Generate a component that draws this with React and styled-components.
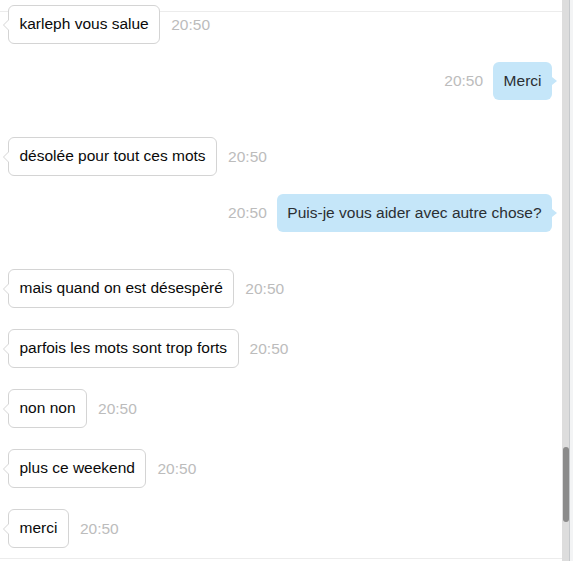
import React from "react";
import styled, { createGlobalStyle } from "styled-components";

const Global = createGlobalStyle`
  html, body { margin: 0; padding: 0; background: #fff; }
  body { font-family: "Liberation Sans", Arial, sans-serif; }
  * { box-sizing: border-box; }
`;

const Frame = styled.div`
  display: flex;
  width: 573px;
  height: 561px;
  overflow: hidden;
  background: #fff;
`;

const Pane = styled.div`
  width: 562px;
  height: 561px;
  display: flex;
  flex-direction: column;
`;

const Messages = styled.div`
  flex: 1;
  min-height: 0;
  overflow: hidden;
  display: flex;
  flex-direction: column;
`;

const Divider = styled.div`
  flex: none;
  height: 12px;
  border-bottom: 1px solid #ececec;
  margin-bottom: -28px;
`;

const Row = styled.div`
  flex: none;
  display: flex;
  align-items: center;
  justify-content: ${(p) => (p.$mine ? "flex-end" : "flex-start")};
  gap: ${(p) => (p.$mine ? "10px" : "11px")};
  padding: ${(p) => (p.$mine ? "0 10px 0 0" : "0 0 0 8px")};
  margin: ${(p) => (p.$mine ? "18px 0 16px" : "21px 0 0")};
`;

const Bubble = styled.div`
  position: relative;
  font-size: 15.5px;
  line-height: 18px;
  white-space: nowrap;
  border-radius: 6px;
  ${(p) =>
    p.$mine
      ? `
    background: #c5e6f9;
    color: #2b2f33;
    padding: 10px 10.5px;
    &::after {
      content: "";
      position: absolute;
      right: -5px;
      top: 50%;
      margin-top: -4px;
      border-top: 4px solid transparent;
      border-bottom: 4px solid transparent;
      border-left: 5px solid #c5e6f9;
    }
  `
      : `
    background: #fff;
    color: #0a0a0a;
    border: 1px solid #d4d4d4;
    padding: 9px 10.5px 10px;
    &::before {
      content: "";
      position: absolute;
      left: -6px;
      top: 50%;
      margin-top: -6px;
      border-top: 6px solid transparent;
      border-bottom: 6px solid transparent;
      border-right: 6px solid #d4d4d4;
    }
    &::after {
      content: "";
      position: absolute;
      left: -5px;
      top: 50%;
      margin-top: -5px;
      border-top: 5px solid transparent;
      border-bottom: 5px solid transparent;
      border-right: 5px solid #fff;
    }
  `}
`;

const Time = styled.span`
  font-size: 15.5px;
  color: #bcbcbc;
  white-space: nowrap;
`;

const Footer = styled.div`
  flex: none;
  height: 3px;
  border-top: 1px solid #ececec;
`;

const Track = styled.div`
  width: 8px;
  height: 561px;
  background: #dddddd;
  border-right: 1px solid #c6c9cc;
  display: flex;
  flex-direction: column;
`;

const Thumb = styled.div`
  width: 6px;
  margin: 447px 0 0 1px;
  height: 75px;
  border-radius: 3px;
  background: #8b8b8b;
`;

const Edge = styled.div`
  width: 3px;
  height: 561px;
  background: #f3f4f5;
`;

const messages = [
  { mine: false, text: "karleph vous salue" },
  { mine: true, text: "Merci" },
  { mine: false, text: "désolée pour tout ces mots" },
  { mine: true, text: "Puis-je vous aider avec autre chose?" },
  { mine: false, text: "mais quand on est désespèré" },
  { mine: false, text: "parfois les mots sont trop forts" },
  { mine: false, text: "non non" },
  { mine: false, text: "plus ce weekend" },
  { mine: false, text: "merci" },
];

export default function App() {
  return (
    <>
      <Global />
      <Frame>
        <Pane>
          <Messages>
            <Divider />
            {messages.map((m, i) => (
              <Row key={i} $mine={m.mine}>
                {m.mine ? (
                  <>
                    <Time>20:50</Time>
                    <Bubble $mine>{m.text}</Bubble>
                  </>
                ) : (
                  <>
                    <Bubble>{m.text}</Bubble>
                    <Time>20:50</Time>
                  </>
                )}
              </Row>
            ))}
          </Messages>
          <Footer />
        </Pane>
        <Track>
          <Thumb />
        </Track>
        <Edge />
      </Frame>
    </>
  );
}
